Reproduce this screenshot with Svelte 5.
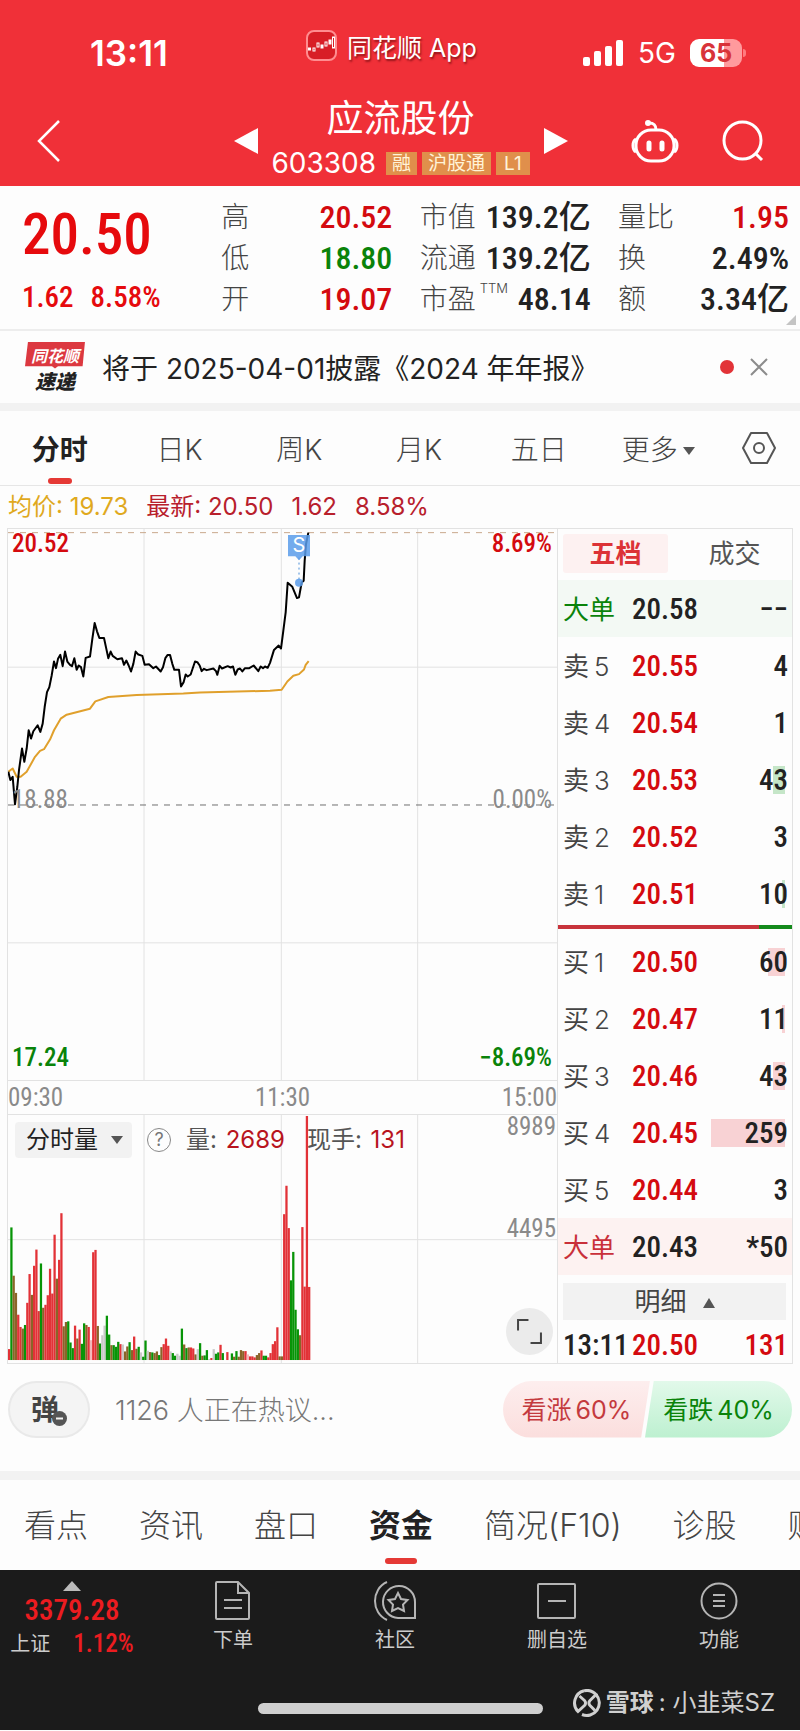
<script>
	const stats = [
		[
			{ label: "高", value: "20.52", tone: "up" },
			{ label: "低", value: "18.80", tone: "down" },
			{ label: "开", value: "19.07", tone: "up" },
		],
		[
			{ label: "市值", value: "139.2亿" },
			{ label: "流通", value: "139.2亿" },
			{ label: "市盈", sup: "TTM", value: "48.14" },
		],
		[
			{ label: "量比", value: "1.95", tone: "up" },
			{ label: "换", value: "2.49%" },
			{ label: "额", value: "3.34亿" },
		],
	];

	const periods = ["分时", "日K", "周K", "月K", "五日", "更多"];
	let period = "分时";

	const sells = [
		{ label: "卖5", price: "20.55", qty: "4", depth: 0 },
		{ label: "卖4", price: "20.54", qty: "1", depth: 0 },
		{ label: "卖3", price: "20.53", qty: "43", depth: 12 },
		{ label: "卖2", price: "20.52", qty: "3", depth: 0 },
		{ label: "卖1", price: "20.51", qty: "10", depth: 3 },
	];
	const buys = [
		{ label: "买1", price: "20.50", qty: "60", depth: 17 },
		{ label: "买2", price: "20.47", qty: "11", depth: 3 },
		{ label: "买3", price: "20.46", qty: "43", depth: 12 },
		{ label: "买4", price: "20.45", qty: "259", depth: 74 },
		{ label: "买5", price: "20.44", qty: "3", depth: 0 },
	];

	const sections = ["看点", "资讯", "盘口", "资金", "简况(F10)", "诊股", "财务"];
	let section = "资金";

	const priceLine =
		"25,1115 31,1140 38,1130 45,1213 52,1160 57,1110 66,1045 73,1085 80,1045 86,990 93,1015 100,993 113,975 121,995 128,970 134,920 141,875 148,860 155,825 162,783 168,803 174,775 181,763 188,797 195,753 202,783 210,793 216,797 223,773 230,808 236,795 243,800 250,828 257,772 270,768 277,715 284,667 291,692 298,712 312,712 319,745 325,773 332,753 338,766 352,776 366,773 372,793 379,780 386,795 393,813 400,790 407,753 415,762 427,766 434,793 447,791 460,803 468,798 482,813 489,800 496,773 503,763 510,763 517,790 523,808 537,808 543,858 551,845 557,822 563,828 572,822 585,783 592,785 599,795 605,812 612,805 620,809 640,804 648,812 652,823 659,796 666,804 683,797 692,801 699,798 706,823 713,807 720,804 727,813 735,803 748,803 761,795 775,812 782,798 789,803 795,798 803,802 810,787 822,748 836,735 843,744 850,690 857,635 863,546 877,558 891,592 897,590 905,545 911,540 914,480 918,430 925,395";
	const averageLine =
		"25,1115 38,1105 50,1130 62,1130 80,1115 105,1070 120,1052 132,1047 150,1018 162,990 182,955 200,943 270,925 286,903 325,890 410,884 550,879 600,876 810,871 845,868 862,843 880,826 897,821 912,807 917,793 926,782";

	// one entry per minute: r = up, g = down, m = mixed, n = flat, p = faint up
	const volumes =
		"33r 401g 255m 203m 137r 100r 95m 106g 173r 260r 197m 285r 334r 148r 292g 158m 167r 196r 276r 201r 379r 246m 303r 444r 102m 115m 117g 53g 36g 104r 65m 92r 49g 111g 106m 100r 60p 326r 333r 103m 50g 75n 104n 134g 77g 45m 45g 40g 55g 48r 47n 26m 41m 54g 30m 71r 34m 40g 23n 10g 59g 28n 24m 23g 21m 26m 15g 39m 48r 65r 43r 26n 21g 13g 19n 13n 95g 47m 36g 38m 38r 35r 17m 33n 51g 13m 14g 30g 3n 6r 33n 19g 23g 46r 21g 0n 24r 0n 20g 10m 27g 10m 30m 27m 27r 17p 11r 11r 8r 15m 21m 29r 13g 13g 8r 21r 48r 57r 99r 11m 11m 441r 527r 399r 241g 327g 152g 93g 75m 402r 222r 738r 221r";
	const barColors = { r: "#e23237", g: "#079407", m: "#8a6428", n: "#c9c9c9", p: "#f3b9bc" };
	const bars = volumes.split(" ").map((v) => ({
		height: parseInt(v),
		color: barColors[v.slice(-1)],
	}));
	const barStep = 907 / bars.length;
</script>

<div class="page">
	<header>
		<div class="status">
			<span class="clock">13:11</span>
			<div class="app">
				<svg width="32" height="32" viewBox="0 0 32 32">
					<rect x="1" y="1" width="29" height="29" rx="7" fill="#d81e26" stroke="#ff8d90" stroke-width="2" />
					<g fill="#fff" stroke="#fff">
						<rect x="2.500" y="18" width="2" height="2" />
						<rect x="11" y="13" width="2" height="4" fill="none" />
						<rect x="15" y="15" width="2" height="3" />
						<rect x="23" y="10" width="2" height="4" />
					</g>
					<g fill="none" stroke="#fff">
						<rect x="7" y="18" width="2" height="3" />
						<rect x="19" y="12" width="2" height="4" />
						<rect x="26.500" y="7" width="2" height="11" />
					</g>
				</svg>
				<span>同花顺 App</span>
			</div>
			<div class="signal">
				<svg width="42" height="27" viewBox="0 0 42 27" fill="#fff">
					<rect x="1" y="17" width="7" height="9" rx="2" />
					<rect x="12" y="11" width="7" height="15" rx="2" />
					<rect x="23" y="6" width="7" height="20" rx="2" />
					<rect x="34" y="0" width="7" height="26" rx="2" />
				</svg>
				<span>5G</span>
				<div class="battery"><b>65</b></div>
			</div>
		</div>
		<div class="title-bar">
			<button class="back" aria-label="返回">
				<svg width="24" height="42" viewBox="0 0 24 42" fill="none" stroke="#fff" stroke-width="2.500">
					<path d="M22 1 2 21l20 20" />
				</svg>
			</button>
			<button aria-label="上一只">
				<svg width="24" height="28" viewBox="0 0 24 28" fill="#fff"><path d="M24 1v26L0 14z" /></svg>
			</button>
			<div class="stock">
				<h1>应流股份</h1>
				<div class="code">
					<span>603308</span>
					<i>融</i><i>沪股通</i><i class="level">L1</i>
				</div>
			</div>
			<button aria-label="下一只">
				<svg width="24" height="28" viewBox="0 0 24 28" fill="#fff"><path d="M0 1v26l24-13z" /></svg>
			</button>
			<div class="tools">
				<button aria-label="助手">
					<svg width="48" height="44" viewBox="0 0 48 44" fill="none" stroke="#fff" stroke-width="3">
						<rect x="5" y="11" width="38" height="31" rx="15" />
						<path d="M5 20c-4 2-4 11 0 13M43 20c4 2 4 11 0 13M25 11c0-5-2-7-7-7" />
						<circle cx="17" cy="4" r="1.500" />
						<path d="M18 24v6M31 24v6" stroke-width="5" stroke-linecap="round" />
					</svg>
				</button>
				<button aria-label="搜索">
					<svg width="42" height="42" viewBox="0 0 42 42" fill="none" stroke="#fff" stroke-width="3">
						<circle cx="20.500" cy="20.500" r="18.500" />
						<path d="m33 33 7 7" />
					</svg>
				</button>
			</div>
		</div>
	</header>

	<section class="quote">
		<div class="last">
			<strong>20.50</strong>
			<p><span>1.62</span><span>8.58%</span></p>
		</div>
		{#each stats as column}
			<dl>
				{#each column as item}
					<div>
						<dt>{item.label}{#if item.sup}<sup>{item.sup}</sup>{/if}</dt>
						<dd class={item.tone}>{item.value}</dd>
					</div>
				{/each}
			</dl>
		{/each}
		<span class="corner"></span>
	</section>

	<section class="news">
		<div class="logo">
			<b>同花顺</b>
			<em>速递</em>
		</div>
		<a href="#report">将于 2025-04-01披露《2024 年年报》</a>
		<span class="dot"></span>
		<button aria-label="关闭">
			<svg width="18" height="18" viewBox="0 0 18 18" stroke="#8c8c8c" stroke-width="2"><path d="m1 1 16 16M17 1 1 17" /></svg>
		</button>
	</section>

	<nav class="periods">
		{#each periods as name}
			<button class:active={period === name} on:click={() => (period = name)}>
				{name}{#if name === "更多"}<span class="caret"></span>{/if}
			</button>
		{/each}
		<button class="settings" aria-label="设置">
			<svg width="36" height="32" viewBox="0 0 36 32" fill="none" stroke="#555" stroke-width="2">
				<path d="M10 1h16l8 15-8 15H10L2 16z" stroke-linejoin="round" />
				<circle cx="18" cy="16" r="5" />
			</svg>
		</button>
	</nav>

	<div class="legend">
		<span class="avg">均价: 19.73</span>
		<span>最新: 20.50</span>
		<span>1.62</span>
		<span>8.58%</span>
	</div>

	<main>
		<div class="charts">
			<div class="price-chart">
				<svg viewBox="24 384 1647 1659" preserveAspectRatio="none">
					<g stroke="#e2e2e2">
						<path d="M432 384V2043M844 384V2043M1253 384V2043M24 800H1671M24 1630H1671" />
					</g>
					<path class="dash" d="M24 395H1671" stroke="#c9a88c" />
					<path class="dash" d="M24 1215H1671" stroke="#707070" />
					<polyline points={averageLine} stroke="#e0a02c" class="line" />
					<polyline points={priceLine} stroke="#000" class="line" />
					<path d="M897 470V540" stroke="#4a8fd8" stroke-dasharray="2 3" />
					<g fill="#5b9cea" fill-opacity="0.850">
						<path d="M864 402h66v64h-22l-11 12-11-12h-22z" />
						<circle cx="897" cy="546" r="12" />
					</g>
				</svg>
				<span class="mark">S</span>
				<span class="label top left up">20.52</span>
				<span class="label top right up">8.69%</span>
				<span class="label middle left">18.88</span>
				<span class="label middle right">0.00%</span>
				<span class="label bottom left down">17.24</span>
				<span class="label bottom right down">−8.69%</span>
			</div>
			<div class="times">
				<span>09:30</span>
				<span>11:30</span>
				<span>15:00</span>
			</div>
			<div class="volume-chart">
				<svg viewBox="24 162 1647 750" preserveAspectRatio="none">
					<path stroke="#e2e2e2" d="M432 162V912M844 162V912M1253 162V912M24 539H1671" />
					{#each bars as bar, i}
						<rect x={24 + i * barStep} y={903 - bar.height} width={barStep} height={bar.height} fill={bar.color} />
					{/each}
				</svg>
				<div class="volume-head">
					<button class="picker">分时量<span class="caret"></span></button>
					<span class="help">?</span>
					<span>量: <b>2689</b></span>
					<span class="current">现手: <b>131</b></span>
				</div>
				<span class="scale">8989</span>
				<span class="scale half">4495</span>
				<button class="expand" aria-label="全屏">
					<svg width="24" height="24" viewBox="0 0 24 24" fill="none" stroke="#444" stroke-width="2"><path d="M1 11V1h10M13 23h10V13" /></svg>
				</button>
			</div>
		</div>

		<div class="book">
			<div class="book-tabs">
				<button class="active">五档</button>
				<button>成交</button>
			</div>
			<div class="row big-sell"><span>大单</span><b>20.58</b><em>−−</em></div>
			{#each sells as row}
				<div class="row sell">
					<span>{row.label[0]}<small>{row.label[1]}</small></span>
					<b>{row.price}</b>
					<em><i style="width: {row.depth}px"></i>{row.qty}</em>
				</div>
			{/each}
			<div class="ratio"><span></span></div>
			{#each buys as row}
				<div class="row buy">
					<span>{row.label[0]}<small>{row.label[1]}</small></span>
					<b>{row.price}</b>
					<em><i style="width: {row.depth}px"></i>{row.qty}</em>
				</div>
			{/each}
			<div class="row big-buy"><span>大单</span><b>20.43</b><em>*50</em></div>
			<button class="detail">明细<span class="caret upward"></span></button>
			<div class="tick"><span>13:11</span><b>20.50</b><em>131</em></div>
		</div>
	</main>

	<section class="talk">
		<button class="danmu" aria-label="弹幕">
			弹
			<svg width="15" height="15" viewBox="0 0 15 15"><circle cx="7.500" cy="7.500" r="7.500" fill="#555" /><path d="M4 7.500h7" stroke="#f4f4f4" stroke-width="2" /></svg>
		</button>
		<a href="#talk">1126 人正在热议...</a>
		<div class="votes">
			<button class="bull">看涨<span>60%</span></button>
			<button class="bear">看跌<span>40%</span></button>
		</div>
	</section>

	<nav class="sections">
		{#each sections as name}
			<button class:active={section === name} on:click={() => (section = name)}>{name}</button>
		{/each}
	</nav>

	<footer>
		<div class="dock">
			<a class="index" href="#index">
				<span class="caret upward"></span>
				<b>3379.28</b>
				<span class="sub">上证<b>1.12%</b></span>
			</a>
			<a href="#order">
				<svg width="40" height="40" viewBox="0 0 40 40" fill="none" stroke="#b5b5b5" stroke-width="2">
					<path d="M25 1H4q-1 0-1 1v35q0 1 1 1h31q1 0 1-1V12zv11h11M11 19h18M11 27h18" />
				</svg>
				下单
			</a>
			<a href="#community">
				<svg width="44" height="40" viewBox="0 0 44 40" fill="none" stroke="#b5b5b5" stroke-width="2">
					<path d="M42 37H25a16 16 0 1 1 17-16zM14 1C-2 8-2 32 14 39" />
					<path d="m25 12 3 6 6.500 1-4.500 4.500 1 6.500-6-3-6 3 1-6.500-4.500-4.500 6.500-1z" />
				</svg>
				社区
			</a>
			<a href="#remove">
				<svg width="40" height="40" viewBox="0 0 40 40" fill="none" stroke="#b5b5b5" stroke-width="2">
					<rect x="1" y="3" width="37" height="34" rx="1" />
					<path d="M11 20h18" />
				</svg>
				删自选
			</a>
			<a href="#menu">
				<svg width="40" height="40" viewBox="0 0 40 40" fill="none" stroke="#b5b5b5" stroke-width="2">
					<circle cx="20" cy="20" r="17.500" />
					<path d="M14 14h12M14 20h12M14 25h12" />
				</svg>
				功能
			</a>
		</div>
		<div class="home"></div>
		<div class="watermark">
			<svg width="28" height="28" viewBox="0 0 28 28" fill="none" stroke="#d0d0d0" stroke-width="3">
				<path d="M11 1.800A12.500 12.500 0 0 0 5 22.500l6.500-6a3.500 3.500 0 0 0 0-5L6.500 7" />
				<path d="M11 1.800A12.500 12.500 0 0 1 23 5.500l-6 6a3.500 3.500 0 0 0 0 5l5 5" />
				<path d="M23 5.500A12.500 12.500 0 0 1 9 25.500" />
			</svg>
			<b>雪球</b>
			<span>: 小韭菜SZ</span>
		</div>
	</footer>
</div>

<style>
	:global(body) {
		background: #fdfdfd;
	}

	.page {
		--num: "Roboto Condensed", "Liberation Sans Narrow", Roboto, sans-serif;
		--text: Inter, "Noto Sans CJK SC", sans-serif;
		font-family: var(--text);
		color: #222;
		background: #fdfdfd;
		overflow: hidden;
	}

	button {
		font: inherit;
		color: inherit;
		border: 0;
		padding: 0;
		background: none;
	}

	a {
		color: inherit;
		text-decoration: none;
	}

	svg {
		display: block;
	}

	.up {
		color: #d40a0f;
	}

	.down {
		color: #0a830a;
	}

	.caret {
		display: inline-block;
		border: 6px solid transparent;
		border-top: 8px solid #555;
		border-bottom: 0;
	}

	.caret.upward {
		border-top: 0;
		border-bottom: 10px solid #555;
	}

	header {
		height: 186px;
		background: #f03038;
		color: #fff;
	}

	.status {
		display: grid;
		grid-template-columns: 216px auto 1fr;
		align-items: center;
		height: 96px;
		padding: 10px 58px 0 90px;
		box-sizing: border-box;
	}

	.clock {
		font-size: 35px;
		font-weight: 600;
	}

	.app {
		display: flex;
		align-items: center;
		gap: 9px;
		padding-bottom: 14px;
		font-size: 25px;
		text-shadow: 1px 2px 2px #8f1419;
	}

	.signal {
		display: flex;
		justify-content: flex-end;
		align-items: center;
		gap: 14px;
		font-size: 28px;
	}

	.battery {
		position: relative;
		width: 52px;
		height: 28px;
		border-radius: 9px;
		background: linear-gradient(90deg, #fff 65%, #ff9a9d 65%);
		color: #d8333a;
		font-size: 25px;
		line-height: 28px;
		text-align: center;
	}

	.battery::after {
		content: "";
		position: absolute;
		left: 53px;
		top: 10px;
		width: 3px;
		height: 8px;
		border-radius: 0 4px 4px 0;
		background: #ff7a7e;
	}

	.title-bar {
		display: grid;
		grid-template-columns: 1fr 24px 286px 24px 1fr;
		align-items: center;
		height: 90px;
		padding: 0 36px 0 37px;
	}

	.stock {
		text-align: center;
	}

	h1 {
		margin: 0;
		font-size: 37px;
		font-weight: 400;
		line-height: 44px;
	}

	.code {
		display: flex;
		align-items: center;
		justify-content: center;
		gap: 5px;
		font-size: 28px;
		line-height: 44px;
	}

	.code span {
		margin-right: 5px;
	}

	.code i {
		padding: 0 6px;
		background: #e08f4b;
		color: #fff3d8;
		font-size: 19px;
		font-style: normal;
		line-height: 23px;
	}

	.code .level {
		padding: 0 8px;
	}

	.tools {
		display: flex;
		justify-content: flex-end;
		gap: 43px;
	}

	.quote {
		position: relative;
		display: grid;
		grid-template-columns: 172px repeat(3, 171px);
		justify-content: space-between;
		padding: 11px 11px 9px 22px;
		border-bottom: 2px solid #ededed;
	}

	.last {
		display: flex;
		flex-direction: column;
		color: #e60a0d;
		font-family: var(--num);
	}

	.last strong {
		font-size: 57px;
		font-weight: 500;
		line-height: 76px;
	}

	.last p {
		display: flex;
		gap: 17px;
		margin: 8px 0 0;
		font-size: 29px;
		font-weight: 500;
		line-height: 32px;
	}

	dl {
		margin: 0;
	}

	dl div {
		display: flex;
		justify-content: space-between;
		height: 41px;
		line-height: 41px;
	}

	dt {
		position: relative;
		font-size: 28px;
		font-weight: 300;
		color: #444;
	}

	sup {
		position: absolute;
		left: 60px;
		top: 0;
		font-size: 13px;
		line-height: 18px;
	}

	dd {
		margin: 0;
		font-family: var(--num), "Noto Sans CJK SC";
		font-size: 32px;
		font-weight: 500;
	}

	.corner {
		position: absolute;
		right: 4px;
		bottom: 4px;
		border: 5px solid #c4c4c4;
		border-top-color: transparent;
		border-left-color: transparent;
	}

	.news {
		display: flex;
		align-items: center;
		height: 72px;
		padding: 0 32px 0 25px;
		border-bottom: 8px solid #f2f2f2;
	}

	.logo {
		width: 60px;
		margin-right: 17px;
		text-align: center;
		font-family: "Noto Sans CJK SC", sans-serif;
	}

	.logo b {
		display: block;
		background: #dc3840;
		clip-path: polygon(5% 0, 100% 0, 96% 92%, 55% 92%, 50% 100%, 45% 92%, 0 92%);
		color: #fff;
		font-size: 16px;
		font-style: italic;
		line-height: 27px;
	}

	.logo em {
		display: block;
		font-size: 20px;
		font-weight: 900;
		line-height: 24px;
	}

	.news a {
		flex: 1;
		font-size: 28px;
		white-space: nowrap;
	}

	.dot {
		width: 14px;
		height: 14px;
		margin-right: 16px;
		border-radius: 50%;
		background: #e23338;
	}

	.periods {
		display: flex;
		height: 74px;
		border-bottom: 1px solid #e6e6e6;
		font-size: 28px;
		font-weight: 300;
		color: #444;
	}

	.periods button {
		position: relative;
		flex: 120 1 0;
	}

	.periods .settings {
		display: flex;
		align-items: center;
		justify-content: center;
		flex: 82 1 0;
	}

	.periods .caret {
		margin-left: 5px;
		vertical-align: 5px;
	}

	.periods .active,
	.book-tabs .active,
	.sections .active {
		font-weight: 600;
		color: #222;
	}

	.periods .active::after,
	.sections .active::after {
		content: "";
		position: absolute;
		left: 50%;
		bottom: 1px;
		width: 24px;
		height: 6px;
		margin-left: -12px;
		border-radius: 3px;
		background: #e53935;
	}

	.legend {
		display: flex;
		gap: 18px;
		padding: 0 8px;
		font-size: 24px;
		line-height: 42px;
		color: #b8202c;
	}

	.avg {
		color: #e0a91e;
	}

	main {
		display: grid;
		grid-template-columns: 550fr 236fr;
		margin: 0 7px;
		border-bottom: 1px solid #e2e2e2;
	}

	.charts {
		min-width: 0;
		border-left: 1px solid #e2e2e2;
		font-family: var(--num);
	}

	.charts svg {
		width: 100%;
		height: 100%;
	}

	.charts path,
	.charts polyline {
		vector-effect: non-scaling-stroke;
	}

	.line {
		fill: none;
		stroke-width: 2;
		stroke-linejoin: round;
	}

	.dash {
		stroke-dasharray: 6 6;
	}

	.price-chart {
		position: relative;
		height: 551px;
		border: solid #e2e2e2;
		border-width: 1px 0;
	}

	.label {
		position: absolute;
		font-size: 25px;
		font-weight: 500;
		line-height: 28px;
	}

	.left {
		left: 4px;
	}

	.right {
		right: 5px;
	}

	.top {
		top: 1px;
	}

	.middle {
		top: 257px;
		color: #8a8a8a;
		font-weight: 400;
	}

	.bottom {
		bottom: 8px;
	}

	.mark {
		position: absolute;
		left: 53%;
		top: 5px;
		width: 22px;
		margin-left: -11px;
		color: #fff;
		font: 20px/22px var(--text);
		text-align: center;
	}

	.times {
		display: flex;
		justify-content: space-between;
		font-size: 25px;
		line-height: 33px;
		color: #8a8a8a;
	}

	.volume-chart {
		position: relative;
		height: 248px;
		border-top: 1px solid #e2e2e2;
	}

	.volume-head {
		position: absolute;
		left: 7px;
		top: 7px;
		display: flex;
		align-items: center;
		gap: 15px;
		font: 24px/36px var(--text);
		color: #555;
		white-space: nowrap;
	}

	.volume-head b {
		margin-left: 2px;
		font-weight: 400;
		color: #b8141e;
	}

	.current {
		margin-left: 7px;
	}

	.picker {
		padding: 0 9px 0 11px;
		border-radius: 4px;
		background: #f2f2f2;
		color: #222;
	}

	.picker .caret {
		margin-left: 13px;
		vertical-align: 4px;
	}

	.help {
		width: 22px;
		height: 22px;
		border: 1px solid #888;
		border-radius: 50%;
		font-size: 18px;
		line-height: 22px;
		text-align: center;
		color: #777;
	}

	.scale {
		position: absolute;
		right: 1px;
		top: 0;
		font-size: 25px;
		line-height: 24px;
		color: #8a8a8a;
	}

	.half {
		top: 102px;
	}

	.expand {
		position: absolute;
		right: 4px;
		bottom: 8px;
		width: 47px;
		height: 47px;
		padding: 11px;
		border-radius: 50%;
		background: #ebebeb;
	}

	.book {
		display: flex;
		flex-direction: column;
		border: solid #e2e2e2;
		border-width: 1px 1px 0;
		font-size: 26px;
	}

	.book-tabs {
		display: grid;
		grid-template-columns: 105px 1fr;
		gap: 12px;
		padding: 5px 3px 7px 5px;
		line-height: 39px;
		color: #555;
	}

	.book-tabs .active {
		border-radius: 3px;
		background: #fdf1f1;
		color: #dc3236;
	}

	.row,
	.tick {
		display: grid;
		grid-template-columns: 69px 1fr auto;
		align-items: center;
		height: 57px;
		padding: 0 4px 0 5px;
		color: #444;
	}

	.row span {
		padding-bottom: 3px;
	}

	.row small {
		margin-left: 5px;
		font-size: 26px;
		font-weight: 300;
	}

	.row b,
	.row em,
	.tick {
		font-family: var(--num);
		font-size: 29px;
		font-style: normal;
		font-weight: 500;
	}

	.row b,
	.tick b,
	.tick em {
		color: #d40a0f;
	}

	.row em {
		position: relative;
		z-index: 0;
		color: #222;
	}

	.row i {
		position: absolute;
		right: 3px;
		top: 3px;
		bottom: 3px;
		z-index: -1;
		background: #f8d2d4;
	}

	.sell i {
		background: #c5e6c8;
	}

	.big-sell {
		background: #f3f9f4;
		color: #0a830a;
	}

	.big-buy {
		background: #fdf2f1;
		color: #c9303a;
	}

	.big-sell b,
	.big-buy b {
		color: #222;
	}

	.ratio {
		height: 4px;
		margin: 3px 0 4px;
		background: #148a1c;
	}

	.ratio span {
		display: block;
		width: 86%;
		height: 4px;
		background: #c8343c;
	}

	.detail {
		margin: 8px 6px 0 5px;
		background: #f2f2f2;
		color: #444;
		line-height: 37px;
	}

	.detail .caret {
		margin-left: 16px;
		vertical-align: 3px;
	}

	.tick {
		height: 37px;
		padding-top: 6px;
		color: #222;
	}

	.tick b,
	.tick em {
		font-style: normal;
		font-weight: 500;
	}

	.talk {
		display: flex;
		align-items: center;
		height: 107px;
		padding: 0 8px;
		border-bottom: 9px solid #f2f2f2;
	}

	.danmu {
		position: relative;
		width: 82px;
		height: 57px;
		margin: 0 25px 17px 0;
		padding: 0 8px 3px 0;
		border: 2px solid #e9e9e9;
		border-radius: 29px;
		background: #f4f4f4;
		color: #444;
		font-size: 28px;
		font-weight: 700;
	}

	.danmu svg {
		position: absolute;
		right: 21px;
		bottom: 10px;
	}

	.talk > a {
		flex: 1;
		margin-bottom: 19px;
		font-size: 27px;
		font-weight: 300;
		color: #777;
	}

	.votes {
		display: flex;
		margin-bottom: 17px;
		font-size: 25px;
	}

	.votes button {
		width: 147px;
		height: 57px;
		padding-bottom: 3px;
	}

	.votes span {
		margin-left: 4px;
	}

	.bull {
		border-radius: 29px 0 0 29px;
		background: linear-gradient(#fdeeee, #fbdedd);
		clip-path: polygon(0 0, 100% 0, 94% 100%, 0 100%);
		color: #c43a3e;
	}

	.bear {
		margin-left: -5px;
		border-radius: 0 29px 29px 0;
		background: linear-gradient(#e2f9ea, #bdf0d0);
		clip-path: polygon(6% 0, 100% 0, 100% 100%, 0 100%);
		color: #0a830a;
	}

	.sections {
		display: flex;
		gap: 51px;
		height: 90px;
		padding-left: 24px;
		font-size: 32px;
		font-weight: 300;
		color: #444;
	}

	.sections button {
		position: relative;
		flex: none;
		padding-bottom: 4px;
	}

	.sections .active::after {
		bottom: 6px;
		width: 32px;
		margin-left: -16px;
	}

	footer {
		position: relative;
		height: 160px;
		background: #1b1b1b;
		color: #ccc;
		font-size: 20px;
	}

	.dock {
		display: grid;
		grid-template-columns: 152px repeat(4, 1fr);
		padding-top: 11px;
	}

	.dock a {
		display: flex;
		flex-direction: column;
		align-items: center;
		gap: 5px;
		line-height: 28px;
	}

	.dock .index {
		gap: 0;
		padding-right: 8px;
	}

	.dock .caret {
		border-left-width: 9px;
		border-right-width: 9px;
		border-bottom-color: #bbb;
	}

	.dock b {
		color: #ec1c20;
		font-family: var(--num);
		font-size: 29px;
		font-weight: 500;
		line-height: 39px;
	}

	.sub {
		display: flex;
		align-items: center;
		gap: 23px;
	}

	.dock .sub b {
		font-size: 25px;
		line-height: 28px;
	}

	.home {
		position: absolute;
		left: 50%;
		bottom: 16px;
		width: 285px;
		height: 11px;
		margin-left: -142px;
		border-radius: 6px;
		background: #cfcfcf;
	}

	.watermark {
		position: absolute;
		right: 25px;
		bottom: 10px;
		display: flex;
		align-items: center;
		gap: 5px;
		color: #d0d0d0;
		font-size: 24px;
		line-height: 34px;
	}
</style>
